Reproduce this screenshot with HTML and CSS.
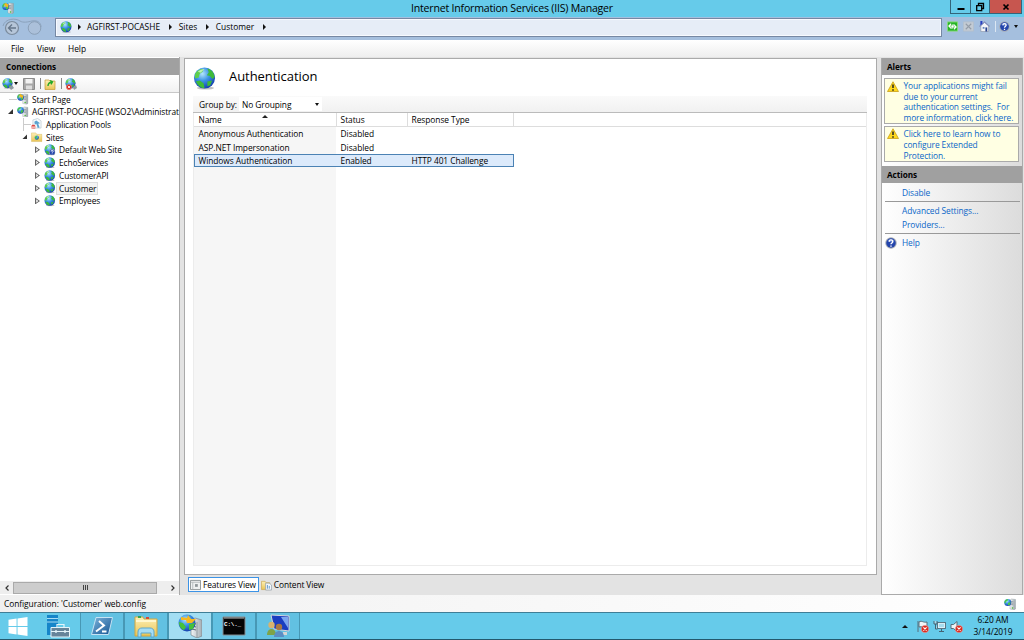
FILE: index.html
```html
<!DOCTYPE html>
<html lang="en">
<head>
    <meta charset="UTF-8">
    <title>Internet Information Services (IIS) Manager</title>
    <link rel="stylesheet" href="styles.css">
</head>
<body>
    <!-- Shared icons -->
    <svg class="sprite" aria-hidden="true">
        <defs>
            <radialGradient id="sea" cx="40%" cy="30%" r="75%">
                <stop offset="0" stop-color="#b4e6fb"/>
                <stop offset=".45" stop-color="#3b93e4"/>
                <stop offset="1" stop-color="#1238a8"/>
            </radialGradient>
            <linearGradient id="tower" x1="0" x2="1">
                <stop offset="0" stop-color="#f4f6f7"/>
                <stop offset="1" stop-color="#a3adb3"/>
            </linearGradient>
            <linearGradient id="paper" x1="0" y1="0" x2="0" y2="1">
                <stop offset="0" stop-color="#fdf0b6"/>
                <stop offset="1" stop-color="#e9c455"/>
            </linearGradient>
            <linearGradient id="shell" x1="0" y1="0" x2="1" y2="1">
                <stop offset="0" stop-color="#7fb5dc"/>
                <stop offset="1" stop-color="#145492"/>
            </linearGradient>
            <symbol id="globe" viewBox="0 0 24 24">
                <ellipse cx="13" cy="22" rx="9" ry="1.6" fill="#777" opacity=".45"/>
                <circle cx="12" cy="11.5" r="11" fill="url(#sea)"/>
                <path d="M2 8c1-4 5-6 9-6l-1 3-3 2-1 4-4 1z" fill="#5fcf4c"/>
                <path d="M15 1.500c4 1 7 4 7.500 9l-2 2-3-3-3-1 2-3z" fill="#3fba3a"/>
                <path d="M3 15l4-1 4 3 1 5c-4 0-7-3-9-7zM15 15l5-1-2 5-3 1z" fill="#3dbb38"/>
                <path d="M5 5c2-2 5-3 7-3l-4 4z" fill="#e4ffe0" opacity=".7"/>
            </symbol>
            <symbol id="server" viewBox="0 0 24 24">
                <path d="M12 4l3-2 8 1v19l-3 2-8-2z" fill="url(#tower)" stroke="#8b959b" stroke-width=".8"/>
                <path d="M20 5v18" stroke="#8b959b" stroke-width=".8"/>
                <path d="M14 7l4.500.5M14 10l4.500.5M14 13l4.500.5" stroke="#6a757b" stroke-width="1.100"/>
                <circle cx="17" cy="20" r="1.500" fill="#45bd28"/>
                <circle cx="7.500" cy="9" r="7" fill="url(#sea)"/>
                <path d="M1 7c1-3 4-5 7-5l-1 4-3 1-1 4-2-1zM8 10l5-2-1 5-4 2z" fill="#4ccb3f"/>
            </symbol>
            <symbol id="startpage" viewBox="0 0 24 24">
                <use href="#server"/>
                <path d="M2 3l4 1 2-3 2 3 4 1-2 3 1 4-4-3-4 1 1-4z" fill="#f6b81f"/>
            </symbol>
            <symbol id="pools" viewBox="0 0 24 24">
                <path d="M4 4l10-3 7 5v15H4z" fill="#f6fafc" stroke="#9db0bd"/>
                <path d="M7 8l4-3 8 6-4 1 3 8-4 1-3-9-3 2z" fill="#5aa3d0"/>
                <path d="M1 17c0-4 8-4 8 0v5H1z" fill="#e04a42"/>
                <path d="M1 19h8" stroke="#fff" stroke-width="2"/>
            </symbol>
            <symbol id="sites" viewBox="0 0 24 24">
                <path d="M1 4h9l2 3h11v15H1z" fill="url(#paper)" stroke="#d8ba66"/>
                <circle cx="12" cy="14" r="4.500" fill="url(#sea)"/>
                <path d="M8 12l5-2-1 4-3 2zM12 16l4-2-3 4z" fill="#45c23a"/>
            </symbol>
            <symbol id="help" viewBox="0 0 24 24">
                <circle cx="12" cy="12" r="11.500" fill="#a8adb5"/>
                <circle cx="12" cy="12" r="9.500" fill="#2445ac"/>
                <path d="M5 8c2-5 12-5 14 0-4 3-10 3-14 0z" fill="#7895e0" opacity=".7"/>
                <path d="M8.500 9.500c0-5 7-5 7 0 0 2.500-3.500 2.500-3.500 5M12 17v2.500" fill="none" stroke="#fff" stroke-width="2.800"/>
            </symbol>
            <symbol id="warning" viewBox="0 0 24 24">
                <path d="M12 1.500L23 21H1z" fill="#ffd91c" stroke="#c69a10" stroke-width="1.500" stroke-linejoin="round"/>
                <path d="M12 7v7M12 16.500v3" stroke="#222" stroke-width="3"/>
            </symbol>
            <symbol id="denied" viewBox="0 0 10 10">
                <circle cx="5" cy="5" r="4.700" fill="#d92b20" stroke="#f7dede" stroke-width=".5"/>
                <path d="M3 3l4 4M7 3L3 7" stroke="#fff" stroke-width="1.400"/>
            </symbol>
        </defs>
    </svg>

    <header class="titlebar">
        <svg class="icon title-icon"><use href="#startpage"/></svg>
        <h1>Internet Information Services (IIS) Manager</h1>
        <div class="window-buttons">
            <span class="win-btn"><svg viewBox="0 0 10 10"><path d="M1.500 7h7" stroke="#000" stroke-width="2"/></svg></span>
            <span class="win-btn"><svg viewBox="0 0 10 10"><path d="M3.500 3V1.500h5v5H7M1.700 3.700h5v5h-5z" fill="none" stroke="#000" stroke-width="1.300"/></svg></span>
            <span class="win-btn close"><svg viewBox="0 0 10 10"><path d="M2.500 2.500l5 5M7.500 2.500l-5 5" stroke="#000" stroke-width="1.700"/></svg></span>
        </div>
    </header>

    <nav class="address-row">
        <svg class="nav-arrows" viewBox="0 0 44 20">
            <path d="M3 8c2-8 13-8 17-5 3 2 8 1 12 0 6-1 9 2 9 6" fill="none" stroke="#8ba2bc"/>
            <circle cx="12" cy="10" r="6.500" fill="#b6c6d9" stroke="#7b8b9d" stroke-width="1.200"/>
            <path d="M16 10H9M12 6.500L8.500 10l3.500 3.500" fill="none" stroke="#66778b" stroke-width="1.400"/>
            <circle cx="34.500" cy="10" r="6.300" fill="#abc0da" stroke="#8ba0b8"/>
        </svg>
        <div class="address">
            <svg class="icon"><use href="#globe"/></svg>
            <i class="crumb-arrow"></i><span>AGFIRST-POCASHE</span>
            <i class="crumb-arrow"></i><span>Sites</span>
            <i class="crumb-arrow"></i><span>Customer</span>
            <i class="crumb-arrow"></i>
        </div>
        <div class="address-tools">
            <svg viewBox="0 0 12 12"><path d="M.5 1h11v10H.5z" fill="#27b428" stroke="#8bdc78"/><path d="M4.500 3L2 5.500 4.500 8M2 5.500h3.500v3M7.500 4L10 6.500 7.500 9M10 6.500H6.500v-3" fill="none" stroke="#fff" stroke-width="1.200"/></svg>
            <svg viewBox="0 0 12 12"><path d="M.5 1h11v10H.5z" fill="#c3cbd4" stroke="#b4bfcc"/><path d="M3 3l6 6M9 3L3 9" stroke="#949da8" stroke-width="1.200"/></svg>
            <svg viewBox="0 0 12 12"><path d="M2 5v6.500h8.500V5L6 1.500z" fill="#f4f5f8" stroke="#8c93a8" stroke-width=".7"/><path d="M.5 6L6 1l5.500 5" fill="none" stroke="#8590bd" stroke-width="1.200"/><path d="M1.500 0h2.200v3L1.500 5z" fill="#283fc0"/><path d="M7 7h2v4.500H7z" fill="#27418d"/><path d="M4 6.500h2v2H4z" fill="#6686bd"/></svg>
            <i class="tool-sep"></i>
            <svg><use href="#help"/></svg>
            <i class="caret"></i>
        </div>
    </nav>

    <nav class="menu">
        <span>File</span>
        <span>View</span>
        <span>Help</span>
    </nav>

    <main class="workspace">
        <section class="connections">
            <h2 class="panel-title">Connections</h2>
            <div class="conn-tools">
                <svg class="icon" viewBox="0 0 12 12"><use href="#globe" width="11" height="11"/><path d="M7 9l3-2 2 3-3 2z" fill="#8e9aa1"/></svg>
                <i class="caret"></i>
                <svg class="icon save" viewBox="0 0 12 12"><path d="M.5.5h11v11H.5z" fill="#a8a8a8" stroke="#8b8b8b"/><path d="M2.500 1h7v4.500h-7z" fill="#f2f2f2"/><path d="M3 7.500h6v4H3z" fill="#ddd"/></svg>
                <i class="tool-sep"></i>
                <svg class="icon" viewBox="0 0 12 12"><path d="M1 2h4l1 1h5v8.500H1z" fill="url(#paper)" stroke="#c29a37" stroke-width=".7"/><path d="M4 8c0-2 1-3.500 4-4M6 2.500l2.500 1.300L7 6.300" fill="none" stroke="#24a829" stroke-width="1.400"/></svg>
                <i class="tool-sep"></i>
                <svg class="icon" viewBox="0 0 12 12"><use href="#globe" width="11" height="11"/><path d="M8 9l3-2 1 3-3 2z" fill="#8e9aa1"/><use href="#denied" x="1" y="6" width="6" height="6"/></svg>
            </div>
            <ul class="tree">
                <li class="lvl0"><i class="stub"></i><svg class="icon"><use href="#startpage"/></svg><span>Start Page</span></li>
                <li class="lvl0"><i class="twisty open"></i><svg class="icon"><use href="#server"/></svg><span class="host">AGFIRST-POCASHE (WSO2\Administrat</span></li>
                <li class="lvl1"><i class="stub branch"></i><svg class="icon"><use href="#pools"/></svg><span>Application Pools</span></li>
                <li class="lvl1"><i class="twisty open"></i><svg class="icon"><use href="#sites"/></svg><span>Sites</span></li>
                <li class="lvl2"><i class="twisty"></i><svg class="icon" viewBox="0 0 12 12"><use href="#globe" width="12" height="12"/><use href="#help" x="5" y="5" width="7" height="7"/></svg><span>Default Web Site</span></li>
                <li class="lvl2"><i class="twisty"></i><svg class="icon"><use href="#globe"/></svg><span>EchoServices</span></li>
                <li class="lvl2"><i class="twisty"></i><svg class="icon"><use href="#globe"/></svg><span>CustomerAPI</span></li>
                <li class="lvl2"><i class="twisty"></i><svg class="icon"><use href="#globe"/></svg><span class="selected">Customer</span></li>
                <li class="lvl2"><i class="twisty"></i><svg class="icon"><use href="#globe"/></svg><span>Employees</span></li>
            </ul>
            <div class="scrollbar">
                <svg viewBox="0 0 8 8"><path d="M5.500 1.500L3 4l2.500 2.500" fill="none" stroke="#333" stroke-width="1.200"/></svg>
                <div class="thumb"><i></i><i></i><i></i></div>
                <svg class="right" viewBox="0 0 8 8"><path d="M2.500 1.500L5 4 2.500 6.500" fill="none" stroke="#333" stroke-width="1.200"/></svg>
            </div>
        </section>

        <section class="center">
            <div class="feature">
                <div class="feature-title">
                    <svg><use href="#globe"/></svg>
                    <h2>Authentication</h2>
                </div>
                <div class="group-by">
                    <span>Group by:</span>
                    <div class="combo"><span>No Grouping</span><i class="caret"></i></div>
                </div>
                <div class="list">
                    <div class="row head">
                        <span>Name<i class="sort"></i></span><span>Status</span><span>Response Type</span>
                    </div>
                    <div class="row"><span>Anonymous Authentication</span><span>Disabled</span><span></span></div>
                    <div class="row"><span>ASP.NET Impersonation</span><span>Disabled</span><span></span></div>
                    <div class="row active"><span>Windows Authentication</span><span>Enabled</span><span>HTTP 401 Challenge</span></div>
                </div>
            </div>
            <div class="view-tabs">
                <span class="tab current"><svg viewBox="0 0 12 12"><path d="M.5 1h11v10H.5z" fill="#eef0f0" stroke="#8a9092"/><path d="M1 3h10M3 3v7.500" stroke="#b5babc"/><path d="M5.500 5h3v3h-3z" fill="#8d9497"/></svg>Features View</span>
                <span class="tab"><svg viewBox="0 0 12 12"><path d="M.5 2h4l1 1.500h4V11h-9z" fill="url(#paper)" stroke="#c7a24b" stroke-width=".7"/><path d="M5 4h4l2.500 2v5.500H5z" fill="#f2f6fa" stroke="#8997a5" stroke-width=".7"/><path d="M7 6v4M9 7v3" stroke="#5a95cb"/></svg>Content View</span>
            </div>
        </section>

        <aside class="side">
            <h2 class="panel-title">Alerts</h2>
            <div class="alert"><svg><use href="#warning"/></svg><p>Your applications might fail<br>due to your current<br>authentication settings.&nbsp; For<br>more information, click here.</p></div>
            <div class="alert"><svg><use href="#warning"/></svg><p>Click here to learn how to<br>configure Extended<br>Protection.</p></div>
            <h2 class="panel-title actions-title">Actions</h2>
            <div class="actions">
                <div class="action-group"><a>Disable</a></div>
                <div class="action-group"><a>Advanced Settings...</a><a>Providers...</a></div>
                <div class="action-group help-item"><svg><use href="#help"/></svg><a>Help</a></div>
            </div>
        </aside>
    </main>

    <footer class="status">
        <span>Configuration: 'Customer' web.config</span>
        <svg class="icon"><use href="#server"/></svg>
    </footer>

    <div class="taskbar">
        <div class="task start">
            <svg viewBox="0 0 20 20"><path d="M0 3l8.500-1.300v7.800H0zM9.500 1.500L20 0v9.500H9.500zM0 10.500h8.500v7.800L0 17zM9.500 10.500H20V20L9.500 18.500z" fill="#fff"/></svg>
        </div>
        <div class="task manager">
            <svg viewBox="0 0 24 24"><path d="M1 1h11v20H1z" fill="#1585c9"/><path d="M1 4.500h11M1 8h11" stroke="#a8dcf3"/><path d="M5 13.500h18.500v9.500H5z" fill="#66849a" stroke="#e4f4fa"/><path d="M11 13v-2.500h7V13M5 17.500h18" fill="none" stroke="#e4f4fa" stroke-width="1.200"/><path d="M10 16v3M19 16v3" stroke="#e4f4fa" stroke-width="1.300"/></svg>
        </div>
        <div class="task open">
            <svg viewBox="0 0 24 24"><path d="M6 3.500h16.500l-4 17H1.500z" fill="url(#shell)" stroke="#c6e3f3" stroke-linejoin="round"/><path d="M9 7l5 4.500-8 6M12 17.500h4.500" fill="none" stroke="#fff" stroke-width="2"/></svg>
        </div>
        <div class="task open">
            <svg viewBox="0 0 24 24"><path d="M1 3h8l1 2h13v17H1z" fill="url(#paper)" stroke="#d1a741"/><path d="M4 2h3v2H4z" fill="#34a551"/><path d="M12 3h3v2h-3z" fill="#d74735"/><path d="M2 7h20" stroke="#fff7ce" stroke-width="2"/><path d="M4 23v-5c0-3 2-4 4-4h8c2 0 4 1 4 4v5h-3v-4H7v4z" fill="#a6ddf5" stroke="#5ba7ce"/></svg>
        </div>
        <div class="task open current">
            <svg viewBox="0 0 24 24"><path d="M13 6l4-2 7 2v16l-5 2-6-3z" fill="url(#tower)" stroke="#7c868c" stroke-width=".7"/><path d="M19 8v16" stroke="#7c868c" stroke-width=".7"/><path d="M14 9l4 1M14 12l4 1M14 15l4 1" stroke="#5c676d"/><circle cx="9" cy="9" r="8.500" fill="url(#sea)"/><path d="M1 8l4 1 3 4-2 3c-3-1-5-4-5-8zM11 10l6-1-2 6-4 1z" fill="#45c23a"/><path d="M3 3l6 1 1-3 3 4 5 0-4 4-5 0-1-3-5 0z" fill="#f6b81f"/></svg>
        </div>
        <div class="task open">
            <svg viewBox="0 0 24 24"><path d="M1 3h22v18H1z" fill="#050505" stroke="#858b8e"/><path d="M2 4h20" stroke="#bbb"/><text x="2" y="11.500" class="prompt">C:\._</text></svg>
        </div>
        <div class="task open">
            <svg viewBox="0 0 24 24"><path d="M5 1l18 1v15L8 15z" fill="#1b3dc0" stroke="#d8d8dc"/><path d="M15 3l7 0v11z" fill="#7ba5ef"/><path d="M17 18l4 0v3h-4z" fill="#d5d5d5"/><circle cx="5.500" cy="11" r="3.200" fill="#d9b36e"/><path d="M1 21c0-8 9-8 9 0z" fill="#7ea348"/><circle cx="13" cy="13" r="3.200" fill="#a87845"/><path d="M8 23c0-8 10-8 10 0z" fill="#5b8ec4"/></svg>
        </div>
        <div class="tray">
            <i class="tray-up"></i>
            <svg viewBox="0 0 13 13"><path d="M2 1v11M3 2c3-2 4 1 8 0v5c-4 1-5-1-8 0z" fill="#eef5f8" stroke="#566e7b"/><use href="#denied" x="5" y="5" width="8" height="8"/></svg>
            <svg viewBox="0 0 13 13"><path d="M4.500 2.500h8v6h-8zM6 11.500h5M8.500 8.500v3M1 1v3h3V1M2.500 4v5h2" fill="#a5dcee" stroke="#446373"/><path d="M5.300 3.300h6.400v4.400H5.300z" fill="none" stroke="#fff" stroke-width=".7"/></svg>
            <svg viewBox="0 0 13 13"><path d="M1 4.500h2.500L7 1.500v10L3.500 8.500H1z" fill="#eef5f8" stroke="#566e7b"/><use href="#denied" x="5" y="5" width="8" height="8"/></svg>
            <div class="clock"><span>6:20 AM</span><span>3/14/2019</span></div>
        </div>
    </div>
</body>
</html>
```

FILE: styles.css
```css
* {
    box-sizing: border-box;
}

body {
    margin: 0;
    width: 1024px;
    height: 640px;
    overflow: hidden;
    display: flex;
    flex-direction: column;
    font-family: "Open Sans", "Noto Sans", sans-serif;
    font-size: 8.4px;
    letter-spacing: -0.06px;
    color: #000;
    background: #f0f0f0;
    white-space: nowrap;
}

h1, h2, p, ul {
    margin: 0;
    padding: 0;
}

svg {
    display: block;
    flex: none;
}

.sprite {
    position: absolute;
    width: 0;
    height: 0;
}

.icon {
    width: 12px;
    height: 12px;
}

.caret {
    border: 2.5px solid transparent;
    border-top: 3px solid #111;
    border-bottom: 0;
}

/* Title bar */
.titlebar {
    position: relative;
    height: 17px;
    flex: none;
    background: #66cbea;
    display: flex;
    justify-content: center;
}

.titlebar h1 {
    font-size: 10.6px;
    font-weight: normal;
    line-height: 17px;
    letter-spacing: -0.22px;
}

.title-icon {
    position: absolute;
    left: 2px;
    top: 2px;
}

.window-buttons {
    position: absolute;
    right: 2px;
    top: 0;
    display: flex;
    height: 14px;
    border: 1px solid #33647a;
    border-top: 0;
}

.win-btn {
    width: 20px;
    display: flex;
    align-items: center;
    justify-content: center;
    border-right: 1px solid #33647a;
}

.win-btn + .win-btn {
    width: 19px;
}

.win-btn svg {
    width: 10px;
    height: 10px;
}

.window-buttons .close {
    width: 31px;
    border-right: 0;
    background: #c7564f;
}

/* Address row */
.address-row {
    height: 23px;
    flex: none;
    display: flex;
    align-items: flex-start;
    padding-top: 1px;
    background: #a5bfde;
}

.nav-arrows {
    width: 44px;
    height: 20px;
    margin-right: 11px;
}

.address {
    width: 887px;
    height: 19px;
    padding: 0 0 2px 4px;
    display: flex;
    align-items: center;
    letter-spacing: 0.03px;
    background: #e6edf7;
    border: 1px solid #7688a3;
    box-shadow: inset 0 0 0 1px #f7faff;
}

.crumb-arrow {
    margin: 0 7px 0 8.5px;
    border: 3px solid transparent;
    border-left: 3px solid #111;
    border-right: 0;
}

.address .icon + .crumb-arrow {
    margin-left: 6px;
    margin-right: 6px;
}

.address-tools {
    height: 17px;
    display: flex;
    align-items: center;
    margin-left: 5px;
}

.address-tools svg {
    width: 11px;
    height: 11px;
    margin-right: 5px;
}

.address-tools .tool-sep {
    margin: 0 3px 0 0;
    border-color: #dbe6f2;
}

.address-tools .tool-sep + svg {
    margin-right: 4px;
}

.tool-sep {
    height: 11px;
    border-left: 1px solid #888;
}

/* Menu */
.menu {
    height: 17px;
    flex: none;
    display: flex;
    gap: 13px;
    padding-left: 11px;
    line-height: 17px;
    background: linear-gradient(#fff, #eee);
}

/* Panels */
.workspace {
    height: 538px;
    flex: none;
    display: flex;
    background: #e3e3e3;
}

.panel-title {
    height: 17px;
    padding-left: 6px;
    background: #a0a0a0;
    font-size: 8.2px;
    font-weight: bold;
    line-height: 18px;
    flex: none;
}

.connections {
    width: 180px;
    margin-right: 4px;
    padding: 1px 0;
    display: flex;
    flex-direction: column;
    border-right: 1px solid #aaa;
    background: #fff;
}

.conn-tools {
    height: 18px;
    flex: none;
    display: flex;
    align-items: center;
    padding-left: 2px;
    background: linear-gradient(#fff, #f1f1f1);
    border-bottom: 1px solid #c8c8c8;
}

.conn-tools .save {
    margin: 0 5px;
}

.conn-tools .tool-sep {
    margin-right: 3px;
}

.conn-tools .icon + .tool-sep {
    margin-left: 5px;
}

.conn-tools .save + .tool-sep {
    margin-left: 0;
}

.tree {
    flex: 1;
    list-style: none;
    letter-spacing: -0.13px;
}

.tree li {
    height: 12.8px;
    display: flex;
    align-items: center;
}

.tree li:first-child {
    height: 12px;
}

.tree .lvl0 {
    padding-left: 8px;
}

.tree .lvl1 {
    padding-left: 22px;
}

.tree .lvl2 {
    padding-left: 35px;
}

.tree .icon {
    width: 11.5px;
    height: 11.5px;
}

.tree span {
    padding: 0 1px 0 2.5px;
    line-height: 11px;
    border: 1px solid transparent;
}

.tree .host {
    letter-spacing: -0.08px;
}

.tree .selected {
    background: #f4f4f4;
    border-color: #ddd;
}

.stub {
    width: 8px;
    height: 1px;
    margin-left: 1px;
    border-top: 1px solid #ccc;
}

.stub.branch {
    height: 13px;
    border-top: 0;
    border-left: 1px solid #ccc;
    background: linear-gradient(#ccc, #ccc) 0 6px / 100% 1px no-repeat;
}

.twisty {
    width: 9px;
    height: 7px;
    flex: none;
}

.twisty::before {
    content: "";
    display: block;
    width: 5px;
    height: 7px;
    background: #666;
    clip-path: polygon(0 0, 100% 50%, 0 100%, 0 0, 25% 25%, 25% 75%, 65% 50%, 25% 25%);
}

.twisty.open::before {
    width: 5px;
    height: 5px;
    margin: 1px 0 0;
    background: #333;
    clip-path: polygon(100% 0, 100% 100%, 0 100%);
}

.scrollbar {
    height: 13px;
    flex: none;
    display: flex;
    align-items: center;
    background: #eee;
}

.scrollbar svg {
    width: 8px;
    height: 8px;
    margin: 0 2px 0 3px;
}

.scrollbar .right {
    margin-left: 12px;
}

.thumb {
    width: 144px;
    height: 12px;
    display: flex;
    align-items: center;
    justify-content: center;
    gap: 1px;
    background: #cdcdcd;
    border: 1px solid #aaa;
}

.thumb i {
    height: 5px;
    border-left: 1px solid #444;
}

/* Center */
.center {
    width: 693px;
    margin-right: 4px;
    padding-top: 1px;
}

.feature {
    height: 517px;
    padding: 8px 9px 8px 8px;
    display: flex;
    flex-direction: column;
    background: #fff;
    border: 1px solid #aaa;
}

.feature-title {
    height: 29px;
    display: flex;
    flex: none;
}

.feature-title svg {
    width: 23px;
    height: 23px;
}

.feature-title h2 {
    margin-left: 13px;
    font-size: 13px;
    font-weight: normal;
    line-height: 19px;
    letter-spacing: -0.05px;
}

.group-by {
    height: 17px;
    flex: none;
    display: flex;
    align-items: center;
    padding-left: 6px;
    background: linear-gradient(#fafafa, #f1f1f1);
    border-bottom: 1px solid #bbb;
}

.combo {
    width: 83px;
    height: 14px;
    margin-left: 2px;
    padding: 0 3px;
    display: flex;
    align-items: center;
    justify-content: space-between;
    background: #fff;
}

.list {
    flex: 1;
    border: solid #ececec;
    border-width: 0 1px 1px;
    background: linear-gradient(90deg, #f6f6f6 142px, #fff 142px);
}

.row {
    height: 13.5px;
    display: grid;
    grid-template-columns: 143px 71px 106px;
    width: 320px;
    line-height: 13px;
}

.row span {
    padding-left: 3.6px;
}

.row span:first-child {
    padding-left: 4.5px;
}

.row.head {
    width: auto;
    height: 14px;
    line-height: 14px;
    background: #fff;
    border-bottom: 1px solid #ddd;
}

.row.head span {
    position: relative;
    border-right: 1px solid #ddd;
}

.sort {
    position: absolute;
    left: 68px;
    top: 2px;
    border: 3px solid transparent;
    border-bottom: 3px solid #222;
    border-top: 0;
}

.row.active {
    height: 13px;
    line-height: 12px;
    background: #dceafb;
    border: 1px solid #4b82b4;
    grid-template-columns: 142px 71px 105px;
}

.row.active span:first-child {
    padding-left: 3.5px;
}

.view-tabs {
    display: flex;
    padding: 2px 0 0 4px;
    letter-spacing: -0.12px;
}

.tab {
    height: 15px;
    display: flex;
    align-items: center;
    padding: 0 2px 0 1px;
    border: 1px solid transparent;
}

.tab svg {
    width: 11px;
    height: 12px;
    margin-right: 2px;
}

.tab.current {
    background: #fff;
    border-color: #3c93e6;
}

/* Alerts and actions */
.side {
    width: 142px;
    margin-top: 1px;
    border: solid #aaa;
    border-width: 0 1px 1px;
    background: linear-gradient(90deg, #fff, #dcdcdc);
}

.side .panel-title {
    padding-left: 5px;
}

.alert {
    display: flex;
    margin: 3px 3px 0 2px;
    padding: 2px 2px 0 3px;
    background: #ffffe3;
    border: 1px solid #aaa;
    color: #0a66c8;
}

.alert + .alert {
    margin-top: 2px;
}

.alert svg {
    width: 12px;
    height: 12px;
    margin-left: -1px;
}

.alert p {
    margin-left: 4.5px;
    line-height: 10.6px;
    letter-spacing: -0.1px;
}

.alert + .alert svg {
    margin-top: -1px;
}

.actions-title {
    margin-top: 4px;
}

.actions {
    padding: 1px 2px 0 3px;
}

.action-group {
    padding: 2px 0 1px 17px;
    border-bottom: 1px solid #999;
    color: #0a66c8;
    letter-spacing: -0.09px;
}

.action-group a {
    display: block;
    line-height: 14px;
}

.help-item {
    display: flex;
    align-items: center;
    padding-left: 0;
    border-bottom: 0;
}

.help-item svg {
    width: 12px;
    height: 12px;
    margin-right: 5px;
}

/* Status bar */
.status {
    height: 17px;
    flex: none;
    display: flex;
    align-items: center;
    justify-content: space-between;
    padding: 0 8px 0 4px;
    background: linear-gradient(90deg, #f0f0f0, #fff);
}

/* Taskbar */
.taskbar {
    height: 28px;
    flex: none;
    display: flex;
    background: #66cbea;
    border-top: 1px solid #3f7e96;
    border-bottom: 1px solid #24596d;
}

.task {
    width: 44px;
    display: flex;
    align-items: center;
    justify-content: center;
}

.task svg {
    width: 24px;
    height: 24px;
}

.task.start {
    width: 36px;
}

.task.start svg {
    width: 20px;
    height: 19px;
}

.task.open {
    border: 1px solid #4798b5;
    border-width: 0 1px;
    background: #62c1e2;
}

.task.open.current {
    background: #a3def3;
}

.prompt {
    fill: #fff;
    font: bold 6px "Liberation Mono", monospace;
    letter-spacing: -0.2px;
}

.tray {
    margin-left: auto;
    display: flex;
    align-items: center;
    padding-right: 10px;
}

.tray svg {
    width: 13px;
    height: 13px;
    margin-right: 4px;
}

.tray-up {
    margin-right: 8px;
    border: 3px solid transparent;
    border-bottom: 3px solid #111;
    border-top: 0;
}

.clock {
    width: 42px;
    margin-left: 5px;
    display: flex;
    flex-direction: column;
    align-items: center;
    line-height: 12px;
}
```
